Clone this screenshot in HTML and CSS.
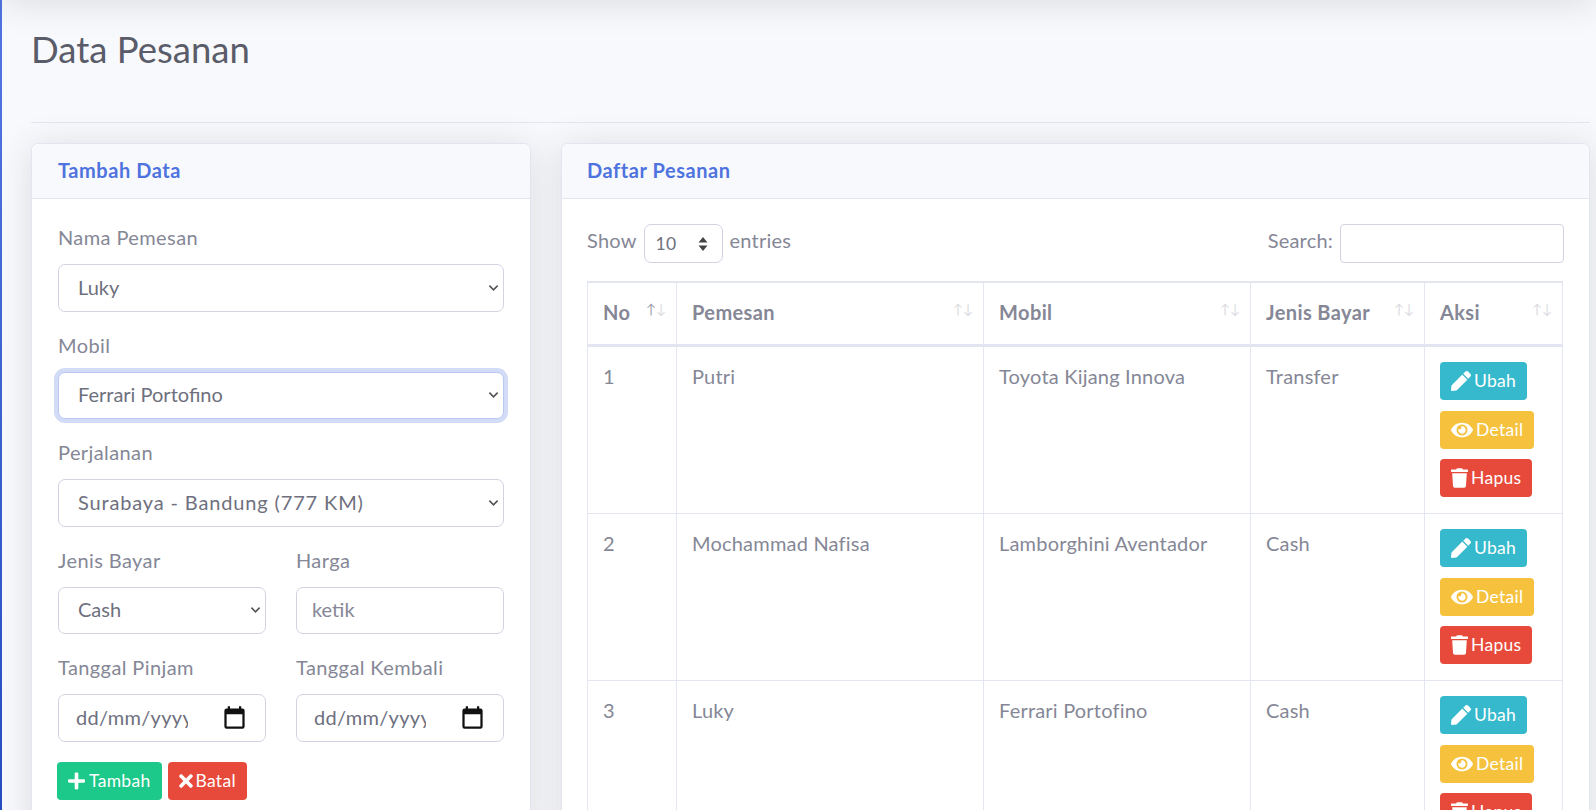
FILE: index.html
```html
<!DOCTYPE html>
<html>

<head>
  <meta charset="utf-8">
  <meta name="viewport" content="width=device-width">
  <title>Data Pesanan</title>
  <link rel="stylesheet" href="styles.css">
</head>

<body>

<svg class="sprite" xmlns="http://www.w3.org/2000/svg">
  <symbol id="i-plus" viewBox="0 0 448 512"><path d="M416 208H272V64c0-17.67-14.33-32-32-32h-32c-17.67 0-32 14.33-32 32v144H32c-17.67 0-32 14.33-32 32v32c0 17.67 14.33 32 32 32h144v144c0 17.67 14.33 32 32 32h32c17.67 0 32-14.33 32-32V304h144c17.67 0 32-14.33 32-32v-32c0-17.67-14.33-32-32-32z"/></symbol>
  <symbol id="i-times" viewBox="0 0 352 512"><path d="M242.72 256l100.07-100.07c12.28-12.28 12.28-32.19 0-44.48l-22.24-22.24c-12.28-12.28-32.19-12.28-44.48 0L176 189.28 75.93 89.21c-12.28-12.28-32.19-12.28-44.48 0L9.21 111.45c-12.28 12.28-12.28 32.19 0 44.48L109.28 256 9.21 356.07c-12.28 12.28-12.28 32.19 0 44.48l22.24 22.24c12.28 12.28 32.2 12.28 44.48 0L176 322.72l100.07 100.07c12.28 12.28 32.2 12.28 44.48 0l22.24-22.24c12.28-12.28 12.28-32.19 0-44.48L242.72 256z"/></symbol>
  <symbol id="i-pen" viewBox="0 0 512 512"><path d="M290.74 93.24l128.02 128.02-277.99 277.99-114.14 12.6C11.35 513.54-1.56 500.62.14 485.34l12.7-114.22 277.9-278.88zm207.2-19.06l-60.11-60.11c-18.75-18.75-49.16-18.75-67.91 0l-56.55 56.55 128.02 128.02 56.55-56.55c18.75-18.76 18.75-49.16 0-67.91z"/></symbol>
  <symbol id="i-eye" viewBox="0 0 576 512"><path d="M572.52 241.4C518.29 135.59 410.93 64 288 64S57.68 135.64 3.48 241.41a32.35 32.35 0 0 0 0 29.19C57.71 376.41 165.07 448 288 448s230.32-71.64 284.52-177.41a32.35 32.35 0 0 0 0-29.19zM288 400a144 144 0 1 1 144-144 143.93 143.93 0 0 1-144 144zm0-240a95.31 95.31 0 0 0-25.31 3.79 47.85 47.85 0 0 1-66.9 66.9A95.78 95.78 0 1 0 288 160z"/></symbol>
  <symbol id="i-trash" viewBox="0 0 448 512"><path d="M432 32H312l-9.4-18.7A24 24 0 0 0 281.1 0H166.8a23.72 23.72 0 0 0-21.4 13.3L136 32H16A16 16 0 0 0 0 48v32a16 16 0 0 0 16 16h416a16 16 0 0 0 16-16V48a16 16 0 0 0-16-16zM53.2 467a48 48 0 0 0 47.9 45h245.8a48 48 0 0 0 47.9-45L416 128H32z"/></symbol>
  <symbol id="i-calendar" viewBox="0 0 24 24"><path d="M19 4h-1V2h-2v2H8V2H6v2H5a2 2 0 0 0-2 2v14a2 2 0 0 0 2 2h14a2 2 0 0 0 2-2V6a2 2 0 0 0-2-2zm0 16H5V9h14v11z"/></symbol>
</svg>

<div class="wrapper">
  <div class="sidebar"></div>

  <main class="content">
    <div class="topbar"></div>

    <div class="page">
      <h1 class="page-title">Data Pesanan</h1>
      <hr class="divider">

      <div class="columns">
        <section class="card card-form">
          <div class="card-header">Tambah Data</div>
          <form class="card-body">
            <div class="form-group">
              <label>Nama Pemesan</label>
              <select class="form-control"><option>Luky</option></select>
            </div>
            <div class="form-group">
              <label>Mobil</label>
              <select class="form-control focused"><option>Ferrari Portofino</option></select>
            </div>
            <div class="form-group">
              <label>Perjalanan</label>
              <select class="form-control wide"><option>Surabaya - Bandung (777 KM)</option></select>
            </div>
            <div class="form-row">
              <div class="form-group">
                <label>Jenis Bayar</label>
                <select class="form-control"><option>Cash</option></select>
              </div>
              <div class="form-group">
                <label>Harga</label>
                <input class="form-control text-input" type="text" placeholder="ketik">
              </div>
            </div>
            <div class="form-row">
              <div class="form-group">
                <label>Tanggal Pinjam</label>
                <div class="date-control">
                  <input type="text" placeholder="dd/mm/yyyy">
                  <svg class="cal"><use href="#i-calendar"/></svg>
                </div>
              </div>
              <div class="form-group">
                <label>Tanggal Kembali</label>
                <div class="date-control">
                  <input type="text" placeholder="dd/mm/yyyy">
                  <svg class="cal"><use href="#i-calendar"/></svg>
                </div>
              </div>
            </div>
            <div class="form-actions">
              <button type="button" class="btn green"><svg class="ic plus"><use href="#i-plus"/></svg>Tambah</button>
              <button type="button" class="btn red"><svg class="ic times"><use href="#i-times"/></svg>Batal</button>
            </div>
          </form>
        </section>

        <section class="card card-list">
          <div class="card-header">Daftar Pesanan</div>
          <div class="card-body">
            <div class="table-tools">
              <div class="tool">Show
                <div class="length-select">10<svg class="updown" viewBox="0 0 10 14"><path d="M5 0l4.500 5.500h-9zM5 14l-4.500-5.500h9z"/></svg></div>
                entries</div>
              <div class="tool">Search: <input class="search" type="search"></div>
            </div>

            <table class="data">
              <colgroup>
                <col class="c-no"><col class="c-name"><col class="c-car"><col class="c-pay"><col class="c-act">
              </colgroup>
              <thead>
                <tr>
                  <th><div class="th-in">No<span class="sort first"><i>↑</i><i>↓</i></span></div></th>
                  <th><div class="th-in">Pemesan<span class="sort"><i>↑</i><i>↓</i></span></div></th>
                  <th><div class="th-in">Mobil<span class="sort"><i>↑</i><i>↓</i></span></div></th>
                  <th><div class="th-in">Jenis Bayar<span class="sort"><i>↑</i><i>↓</i></span></div></th>
                  <th><div class="th-in">Aksi<span class="sort"><i>↑</i><i>↓</i></span></div></th>
                </tr>
              </thead>
              <tbody>
                <tr>
                  <td>1</td><td>Putri</td><td>Toyota Kijang Innova</td><td>Transfer</td>
                  <td class="td-actions"><div class="actions">
                    <a class="btn blue"><svg class="ic"><use href="#i-pen"/></svg>Ubah</a>
                    <a class="btn yellow"><svg class="ic eye"><use href="#i-eye"/></svg>Detail</a>
                    <a class="btn red"><svg class="ic trash"><use href="#i-trash"/></svg>Hapus</a>
                  </div></td>
                </tr>
                <tr>
                  <td>2</td><td>Mochammad Nafisa</td><td>Lamborghini Aventador</td><td>Cash</td>
                  <td class="td-actions"><div class="actions">
                    <a class="btn blue"><svg class="ic"><use href="#i-pen"/></svg>Ubah</a>
                    <a class="btn yellow"><svg class="ic eye"><use href="#i-eye"/></svg>Detail</a>
                    <a class="btn red"><svg class="ic trash"><use href="#i-trash"/></svg>Hapus</a>
                  </div></td>
                </tr>
                <tr>
                  <td>3</td><td>Luky</td><td>Ferrari Portofino</td><td>Cash</td>
                  <td class="td-actions"><div class="actions">
                    <a class="btn blue"><svg class="ic"><use href="#i-pen"/></svg>Ubah</a>
                    <a class="btn yellow"><svg class="ic eye"><use href="#i-eye"/></svg>Detail</a>
                    <a class="btn red"><svg class="ic trash"><use href="#i-trash"/></svg>Hapus</a>
                  </div></td>
                </tr>
              </tbody>
            </table>
          </div>
        </section>
      </div>
    </div>
  </main>
</div>

</body>

</html>
```
FILE: styles.css
```css
* {
  box-sizing: border-box;
}

html, body {
  height: 100%;
  margin: 0;
  overflow: hidden;
}

body {
  background-color: #f8f9fc;
  color: #858796;
  font-family: "Lato", "Noto Sans", sans-serif;
  font-size: 20px;
  line-height: 30px;
}

.sprite {
  display: none;
}

.wrapper {
  display: flex;
  min-height: 100%;
}

.sidebar {
  width: 2px;
  flex-shrink: 0;
  background: linear-gradient(180deg, #4e73df 10%, #224abe 100%);
}

.content {
  flex: 1;
  min-width: 0;
}

.topbar {
  height: 40px;
  margin-top: -40px;
  box-shadow: 0 3px 35px 0 rgba(58, 59, 69, .15);
}

.page {
  padding: 0 6px 0 29px;
}

.page-title {
  margin: 0;
  padding-top: 28px;
  height: 122px;
  color: #5a5c69;
  font-size: 36.500px;
  font-weight: 400;
  line-height: 42px;
}

.divider {
  margin: 0 0 20px;
  border: 0;
  border-top: 1px solid #e3e6f0;
}

.columns {
  display: grid;
  grid-template-columns: 500px 1fr;
  gap: 30px;
  align-items: start;
}

/* cards */
.card {
  background: #fff;
  border: 1px solid #e3e6f0;
  border-radius: 7px;
  box-shadow: 0 3px 35px 0 rgba(58, 59, 69, .15);
}

.card-header {
  height: 55px;
  padding: 11px 25px;
  background: #f8f9fc;
  border-bottom: 1px solid #e3e6f0;
  border-radius: 7px 7px 0 0;
  color: #4e73df;
  font-weight: 700;
  letter-spacing: .55px;
}

.card-body {
  padding: 25px 25px 40px;
  display: block;
}

.card-form .card-header,
.card-form .card-body {
  padding-left: 26px;
  padding-right: 26px;
}

/* form */
.form-group {
  margin-bottom: 20px;
}

.form-group label {
  display: block;
  margin-bottom: 13px;
  line-height: 27px;
  letter-spacing: .4px;
}

.form-row {
  display: grid;
  grid-template-columns: 1fr 1fr;
  gap: 30px;
}

.form-control {
  display: block;
  width: 100%;
  height: 47.500px;
  padding: 0 19px 2px;
  background-color: #fff;
  border: 1px solid #d1d3e2;
  border-radius: 7px;
  color: #6e707e;
  font-family: inherit;
  font-size: 20px;
}

select.form-control {
  appearance: none;
  -webkit-appearance: none;
  background-image: url("data:image/svg+xml,%3Csvg xmlns='http://www.w3.org/2000/svg' viewBox='0 0 12 8'%3E%3Cpath d='M1.500 1.500L6 6l4.500-4.500' fill='none' stroke='%23555' stroke-width='1.800'/%3E%3C/svg%3E");
  background-repeat: no-repeat;
  background-position: right 4px center;
  background-size: 11px 8px;
}

.form-control.wide {
  letter-spacing: .85px;
}

.form-control.focused {
  border-color: #bac8f3;
  box-shadow: 0 0 0 4px rgba(78, 115, 223, .25);
}

.text-input {
  padding: 0 15px 2px;
}

.text-input::placeholder {
  color: #858796;
  opacity: 1;
}

.date-control input::placeholder {
  color: #6e707e;
  opacity: 1;
}

.date-control {
  display: flex;
  align-items: center;
  justify-content: space-between;
  height: 47.500px;
  padding: 0 17px;
  background: #fff;
  border: 1px solid #d1d3e2;
  border-radius: 7px;
}

.date-control input {
  width: 112px;
  padding: 0 0 2px;
  border: 0;
  outline: 0;
  background: none;
  color: #6e707e;
  font-family: inherit;
  font-size: 20px;
  letter-spacing: .3px;
}

.cal {
  width: 27px;
  height: 27px;
  fill: #111;
}

.form-actions {
  display: flex;
  gap: 6px;
  margin-left: -1px;
}

/* buttons */
.btn {
  display: inline-flex;
  align-items: center;
  height: 38px;
  padding: 0 11px;
  border: 0;
  border-radius: 4px;
  color: #fff;
  font-family: inherit;
  font-size: 17.500px;
  letter-spacing: .3px;
}

.green { background: #1cc88a; }
.red { background: #e74a3b; }
.blue { background: #36b9cc; }
.yellow { background: #f6c23e; }

.ic {
  width: 20px;
  height: 20px;
  margin-right: 3px;
  fill: #fff;
  flex-shrink: 0;
}

.ic.plus { width: 17px; margin-right: 4px; }
.ic.times { width: 14px; }
.ic.eye { width: 22px; }
.ic.trash { width: 17px; }

/* table */
.table-tools {
  display: flex;
  justify-content: space-between;
  height: 57px;
}

.tool {
  display: flex;
  align-items: flex-start;
  gap: 7px;
  line-height: 33px;
  letter-spacing: .2px;
}

.length-select {
  display: flex;
  align-items: center;
  justify-content: space-between;
  width: 79px;
  height: 39px;
  padding: 0 14px 0 11px;
  border: 1px solid #d1d3e2;
  border-radius: 7px;
  color: #6e707e;
  font-size: 17.500px;
}

.updown {
  width: 10px;
  height: 14px;
  fill: #444;
}

.search {
  width: 224px;
  height: 39px;
  padding: 0 8px;
  border: 1px solid #d1d3e2;
  border-radius: 4px;
  outline: 0;
  background: #fff;
  appearance: none;
}

.data {
  width: 975px;
  border-collapse: collapse;
  table-layout: fixed;
}

.c-no { width: 89px; }
.c-name { width: 307px; }
.c-car { width: 267px; }
.c-pay { width: 174px; }
.c-act { width: 138px; }

.data th, .data td {
  border: 1px solid #e3e6f0;
  text-align: left;
  vertical-align: top;
}

.data th {
  height: 63px;
  padding: 14px 10px 13px 15px;
  border-top-width: 2px;
  border-bottom: 3px solid #e3e6f0;
  font-weight: 700;
  letter-spacing: .4px;
}

.data td {
  height: 167px;
  padding: 14px 15px 15px;
  font-weight: 400;
  letter-spacing: .2px;
}

.data tbody tr:first-child td {
  height: 168px;
}

.data td.td-actions {
  padding-top: 15.500px;
}

.th-in {
  display: flex;
  justify-content: space-between;
}

.sort {
  display: flex;
  font-size: 13.500px;
  font-weight: 400;
  line-height: 24px;
  letter-spacing: 0;
}

.sort i {
  font-style: normal;
  opacity: .3;
}

.sort.first i:first-child {
  opacity: .8;
}

.actions {
  display: flex;
  flex-direction: column;
  align-items: flex-start;
  gap: 10.500px;
}
```
